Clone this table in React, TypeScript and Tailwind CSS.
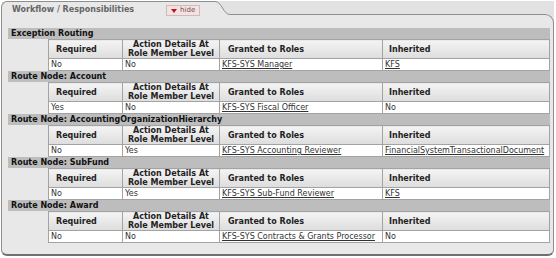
import React from "react"

type Route = {
  title: string
  required: string
  actionDetails: string
  role: string
  inherited: string
  inheritedLink?: boolean
}

const routes: Route[] = [
  { title: "Exception Routing", required: "No", actionDetails: "No", role: "KFS-SYS Manager", inherited: "KFS", inheritedLink: true },
  { title: "Route Node: Account", required: "Yes", actionDetails: "No", role: "KFS-SYS Fiscal Officer", inherited: "No" },
  { title: "Route Node: AccountingOrganizationHierarchy", required: "No", actionDetails: "Yes", role: "KFS-SYS Accounting Reviewer", inherited: "FinancialSystemTransactionalDocument", inheritedLink: true },
  { title: "Route Node: SubFund", required: "No", actionDetails: "Yes", role: "KFS-SYS Sub-Fund Reviewer", inherited: "KFS", inheritedLink: true },
  { title: "Route Node: Award", required: "No", actionDetails: "No", role: "KFS-SYS Contracts & Grants Processor", inherited: "No" },
]

const th = "border border-[#a3a3a3] bg-gradient-to-b from-[#f4f4f4] to-[#dddddd] h-[17px] p-0 font-bold text-[#222] leading-[9px] align-middle"
const td = "border border-[#a3a3a3] bg-white h-[11px] px-[2px] py-0 text-[#333] leading-[11px] whitespace-nowrap"

function RouteSection({ route }: { route: Route }) {
  return (
    <div>
      <div className="h-[11px] bg-[#bdbdbd] pl-[3px] font-bold text-[#111] leading-[11px]">{route.title}</div>
      <table className="ml-[40px] w-[501px] table-fixed border-collapse">
        <colgroup>
          <col className="w-[74px]" />
          <col className="w-[97px]" />
          <col className="w-[163px]" />
          <col className="w-[167px]" />
        </colgroup>
        <thead>
          <tr>
            <th className={`${th} text-left pl-[7px]`}>Required</th>
            <th className={`${th} text-center`}>
              Action Details At
              <br />
              Role Member Level
            </th>
            <th className={`${th} text-left pl-[8px]`}>Granted to Roles</th>
            <th className={`${th} text-left pl-[6px]`}>Inherited</th>
          </tr>
        </thead>
        <tbody>
          <tr>
            <td className={td}>{route.required}</td>
            <td className={td}>{route.actionDetails}</td>
            <td className={td}>
              <a className="underline text-[#333]">{route.role}</a>
            </td>
            <td className={td}>
              {route.inheritedLink ? <a className="underline text-[#333]">{route.inherited}</a> : route.inherited}
            </td>
          </tr>
        </tbody>
      </table>
    </div>
  )
}

export default function App() {
  return (
    <div className="w-[556px] h-[258px] bg-white pt-[1px] pl-[1px] text-[8px]" style={{ fontFamily: '"DejaVu Sans", Verdana, sans-serif' }}>
      <div className="w-[553px]">
        {/* tab header */}
        <div className="flex h-[22px]">
          <div className="w-[214px] border-l border-t border-[#8e8e8e] rounded-tl-[6px] bg-[#e8e8e8] flex items-start pt-[3px] pl-[10px]">
            <span className="font-bold text-[#666] leading-[10px]">Workflow / Responsibilities</span>
            <button className="ml-[32px] h-[11px] px-[4px] flex items-center gap-[3px] bg-[#f2e3e3] border border-[#d5b9b9] text-[#7a5050] text-[7px] leading-[9px]">
              <svg width="6" height="4" viewBox="0 0 6 4">
                <path d="M0 0 L6 0 L3 4 Z" fill="#c0141c" />
              </svg>
              hide
            </button>
          </div>
          <div className="flex flex-1 bg-[#e2e2e2]">
            <svg width="15" height="22" viewBox="0 0 15 22" className="shrink-0">
              <path d="M0 0.5 C7 0.5 8 13.5 15 13.5 L15 22 L0 22 Z" fill="#e8e8e8" />
              <path d="M0 0.5 C7 0.5 8 13.5 15 13.5" fill="none" stroke="#8e8e8e" strokeWidth="1" />
            </svg>
            <div className="flex-1 self-end h-[9px] border-t border-r border-[#8e8e8e] rounded-tr-[9px] bg-[#e8e8e8]" />
          </div>
        </div>
        {/* panel body */}
        <div className="h-[233px] bg-[#e8e8e8] border-l border-r border-[#8e8e8e] border-b-2 border-b-[#707070] rounded-b-[6px] pt-[5px] pl-[6px] pr-[3px]">
          {routes.map((r) => (
            <RouteSection key={r.title} route={r} />
          ))}
        </div>
      </div>
    </div>
  )
}
